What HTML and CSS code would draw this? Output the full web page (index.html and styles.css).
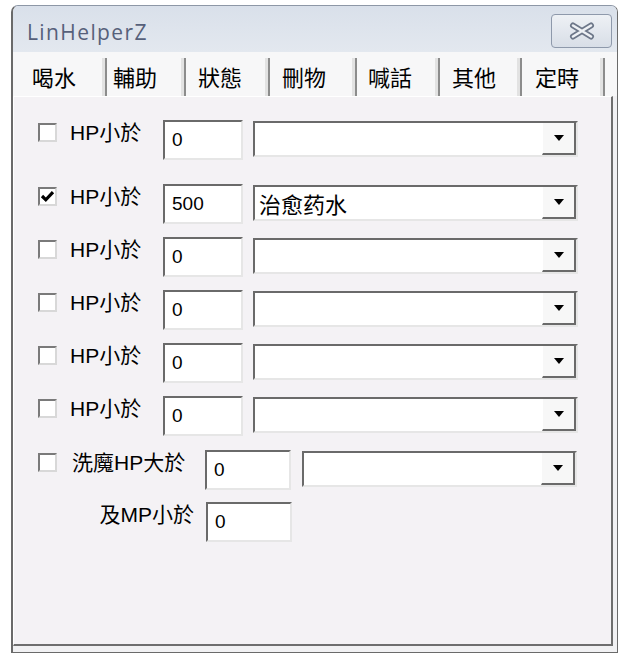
FILE: index.html
```html
<!DOCTYPE html>
<html>
<head>
<meta charset="utf-8">
<title>LinHelperZ</title>
<link rel="stylesheet" href="styles.css">
</head>
<body>
<div class="window">
  <div class="titlebar">
    <span class="title">LinHelperZ</span>
    <div class="close">
      <svg width="28" height="18" viewBox="0 0 28 18">
        <path d="M5 3.5 L23 14.5 M23 3.5 L5 14.5" stroke="#6d7789" stroke-width="6" stroke-linecap="round" fill="none"/>
        <path d="M5 3.5 L23 14.5 M23 3.5 L5 14.5" stroke="#eef1f5" stroke-width="2.6" stroke-linecap="round" fill="none"/>
      </svg>
    </div>
  </div>
  <div class="tabs">
    <div class="tab active">喝水</div>
    <div class="tab">輔助</div>
    <div class="tab">狀態</div>
    <div class="tab">刪物</div>
    <div class="tab">喊話</div>
    <div class="tab">其他</div>
    <div class="tab">定時</div>
  </div>
  <div class="panel">
    <div class="row first">
      <span class="cb"></span>
      <span class="lbl">HP小於</span>
      <div class="edit">0</div>
      <div class="combo"><span class="val"></span><span class="btn"><span class="arrow"></span></span></div>
    </div>
    <div class="row second">
      <span class="cb checked"><svg width="15" height="15" viewBox="0 0 15 15"><path d="M2 7 L5.8 10.8 L13 3.2" stroke="#000" stroke-width="3.2" fill="none"/></svg></span>
      <span class="lbl">HP小於</span>
      <div class="edit">500</div>
      <div class="combo"><span class="val">治愈药水</span><span class="btn"><span class="arrow"></span></span></div>
    </div>
    <div class="row">
      <span class="cb"></span>
      <span class="lbl">HP小於</span>
      <div class="edit">0</div>
      <div class="combo"><span class="val"></span><span class="btn"><span class="arrow"></span></span></div>
    </div>
    <div class="row">
      <span class="cb"></span>
      <span class="lbl">HP小於</span>
      <div class="edit">0</div>
      <div class="combo"><span class="val"></span><span class="btn"><span class="arrow"></span></span></div>
    </div>
    <div class="row">
      <span class="cb"></span>
      <span class="lbl">HP小於</span>
      <div class="edit">0</div>
      <div class="combo"><span class="val"></span><span class="btn"><span class="arrow"></span></span></div>
    </div>
    <div class="row">
      <span class="cb"></span>
      <span class="lbl">HP小於</span>
      <div class="edit">0</div>
      <div class="combo"><span class="val"></span><span class="btn"><span class="arrow"></span></span></div>
    </div>
    <div class="row mana">
      <span class="cb"></span>
      <span class="lbl wide">洗魔HP大於</span>
      <div class="edit wide">0</div>
      <div class="combo short"><span class="val"></span><span class="btn"><span class="arrow"></span></span></div>
    </div>
    <div class="row mp">
      <span class="lbl right">及MP小於</span>
      <div class="edit wide">0</div>
    </div>
  </div>
</div>
</body>
</html>
```
FILE: styles.css
```css
* { box-sizing: border-box; }
html, body { margin: 0; padding: 0; background: #ffffff; }
body {
  font-family: "Liberation Sans", "Noto Sans CJK TC", sans-serif;
  width: 628px;
  height: 662px;
  overflow: hidden;
}
.window {
  margin: 5px 0 0 11px;
  width: 607px;
  height: 648px;
  border: 1px solid #6a6a6a;
  border-left: 2px solid #6a6a6a;
  border-top-color: #8d97a6;
  border-radius: 7px 7px 0 0;
  background: #f1f1f3;
  display: flex;
  flex-direction: column;
  overflow: hidden;
}
.titlebar {
  height: 46px;
  flex: none;
  display: flex;
  justify-content: space-between;
  align-items: flex-start;
  background: linear-gradient(#d9e0ea, #e3e8ef);
  padding-left: 14px;
}
.title {
  font-family: "Open Sans", "Noto Sans", sans-serif;
  font-size: 21px;
  line-height: 28px;
  letter-spacing: 1.4px;
  color: #56607a;
  margin-top: 12px;
}
.close {
  width: 61px;
  height: 34px;
  margin: 8px 5px 0 0;
  border: 1px solid #8e99ab;
  border-radius: 4px;
  background: linear-gradient(#eef1f5, #d8dee7);
  display: flex;
  align-items: center;
  justify-content: center;
}
.tabs {
  height: 44px;
  flex: none;
  display: flex;
  align-items: flex-end;
  background: #f7f7f8;
  font-family: "Noto Sans CJK TC", sans-serif;
  font-size: 22px;
}
.tab {
  height: 38px;
  line-height: 36px;
  border-right: 2px solid #8c8c8c;
  box-shadow: inset -3px 0 0 #e2e2e2;
  color: #000;
  padding-left: 12px;
  width: 83px;
}
.tab:nth-child(1) { width: 94px; padding-left: 19px; }
.tab:nth-child(2) { width: 79px; padding-left: 6px; }
.tab:nth-child(3) { width: 84px; }
.tab:nth-child(4) { width: 87px; }
.tab:nth-child(5) { width: 83px; padding-left: 11px; }
.tab:nth-child(6) { width: 82px; }
.tab:nth-child(7) { width: 83px; padding-left: 13px; }
.panel {
  flex: 1;
  margin: 0 4px 6px 0;
  background: #f4f2f5;
  border-left: 1px solid #ffffff;
  border-top: 1px solid #ffffff;
  border-right: 2px solid #6e6e6e;
  border-bottom: 2px solid #6e6e6e;
  padding: 23px 0 0 24px;
  display: flex;
  flex-direction: column;
}
.row {
  display: flex;
  align-items: flex-start;
  height: 40px;
  margin-bottom: 13px;
}
.row.first { margin-bottom: 24px; }
.row.mana { margin-top: 1px; margin-bottom: 12px; }
.cb {
  width: 19px;
  height: 19px;
  margin-top: 3px;
  border: 2px solid;
  border-color: #7a7a7a #d8d8d8 #d8d8d8 #7a7a7a;
  background: #ffffff;
  display: flex;
  align-items: center;
  justify-content: center;
  flex: none;
}
.lbl {
  font-size: 21px;
  line-height: 24px;
  margin-top: 1px;
  margin-left: 13px;
  width: 93px;
  color: #000;
  white-space: nowrap;
  flex: none;
}
.lbl.wide { margin-left: 15px; width: 133px; }
.lbl.right { margin-left: 0; width: 168px; text-align: right; padding-right: 12px; }
.edit {
  width: 80px;
  height: 40px;
  border: 2px solid;
  border-color: #6a6a6a #e6e6e6 #e6e6e6 #6a6a6a;
  background: #ffffff;
  font-size: 19px;
  line-height: 36px;
  padding-left: 7px;
  flex: none;
}
.edit.wide { width: 86px; }
.combo {
  width: 325px;
  height: 36px;
  margin-left: 10px;
  margin-top: 1px;
  border: 2px solid;
  border-color: #6a6a6a #e6e6e6 #e6e6e6 #6a6a6a;
  background: #ffffff;
  display: flex;
  flex: none;
}
.combo.short { width: 275px; margin-left: 11px; }
.val {
  flex: 1;
  font-family: "Noto Sans CJK SC", sans-serif;
  font-size: 22px;
  line-height: 32px;
  padding-left: 4px;
}
.btn {
  width: 34px;
  height: 32px;
  background: #f7f7f7;
  border-left: 1px solid #ffffff;
  border-right: 2px solid #6a6a6a;
  border-bottom: 2px solid #6a6a6a;
  display: flex;
  align-items: center;
  justify-content: center;
}
.arrow {
  width: 0;
  height: 0;
  border-left: 5px solid transparent;
  border-right: 5px solid transparent;
  border-top: 6px solid #000;
}
```
